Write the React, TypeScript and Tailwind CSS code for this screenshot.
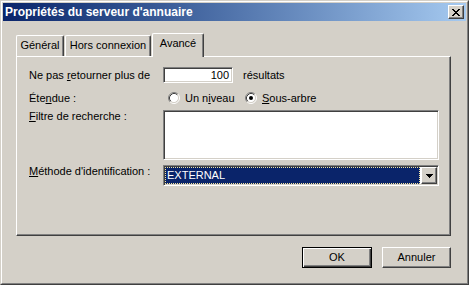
import type { ReactNode } from 'react'

const SUNKEN =
  'border border-t-[#808080] border-l-[#808080] border-r-white border-b-white shadow-[inset_1px_1px_0_#404040,inset_-1px_-1px_0_#d4d0c8]'
const RAISED =
  'border border-t-white border-l-white border-r-[#404040] border-b-[#404040] shadow-[inset_-1px_-1px_0_#808080,inset_1px_1px_0_#d4d0c8]'

// pixel glyphs, one string per row
function Glyph({ rows }: { rows: string[] }) {
  const w = rows[0].length
  const h = rows.length
  return (
    <svg width={w} height={h} viewBox={`0 0 ${w} ${h}`} shapeRendering="crispEdges">
      {rows.flatMap((row, y) =>
        row.split('').map((c, x) => (c === 'x' ? <rect key={`${x}-${y}`} x={x} y={y} width={1} height={1} fill="#000" /> : null))
      )}
    </svg>
  )
}

const CLOSE_X = ['xx....xx', '.xx..xx.', '..xxxx..', '...xx...', '..xxxx..', '.xx..xx.', 'xx....xx']
const ARROW = ['xxxxxxx', '.xxxxx.', '..xxx..', '...x...']

function Radio({ checked }: { checked?: boolean }) {
  return (
    <svg width={12} height={12} viewBox="0 0 12 12" className="shrink-0">
      <circle cx={6} cy={6} r={4.5} fill="#fff" />
      <path d="M2.11 9.89 A5.5 5.5 0 0 1 9.89 2.11" stroke="#808080" fill="none" />
      <path d="M9.89 2.11 A5.5 5.5 0 0 1 2.11 9.89" stroke="#fff" fill="none" />
      <path d="M2.82 9.18 A4.5 4.5 0 0 1 9.18 2.82" stroke="#404040" fill="none" />
      <path d="M9.18 2.82 A4.5 4.5 0 0 1 2.82 9.18" stroke="#d4d0c8" fill="none" />
      {checked && <circle cx={6} cy={6} r={2} fill="#000" />}
    </svg>
  )
}

function Tab({ children, active, className }: { children: ReactNode; active?: boolean; className: string }) {
  return (
    <div
      className={`flex justify-center pt-[3px] rounded-t-[2px] border-l border-t border-r border-l-white border-t-white border-r-[#404040] shadow-[inset_-1px_0_0_#808080] bg-[#d4d0c8] ${
        active ? 'h-[24px] -mb-px relative z-10' : 'h-[21px]'
      } ${className}`}
    >
      {children}
    </div>
  )
}

export default function App() {
  return (
    <div className="w-[469px] h-[285px] bg-[#d4d0c8] border border-t-[#d4d0c8] border-l-[#d4d0c8] border-r-[#404040] border-b-[#404040] font-['Liberation_Sans',Arial,sans-serif] text-[11px] leading-[13px] text-black select-none">
      <div className="h-full border border-t-white border-l-white border-r-[#808080] border-b-[#808080] p-px flex flex-col">
        {/* Title bar */}
        <div className="h-[18px] shrink-0 flex items-center justify-between pl-[2px] pr-[2px] bg-linear-to-r from-[#0a246a] to-[#a6caf0]">
          <span className="text-white font-bold text-[12px] leading-[14px]">Propriétés du serveur d'annuaire</span>
          <div className={`w-[16px] h-[14px] bg-[#d4d0c8] flex items-center justify-center ${RAISED}`}>
            <Glyph rows={CLOSE_X} />
          </div>
        </div>

        <div className="pl-[13px] pr-[15px] pt-[12px] flex flex-col">
          {/* Tabs */}
          <div className="h-[23px] flex items-end">
            <Tab className="w-[48px]">Général</Tab>
            <Tab className="w-[86px] ml-px">Hors connexion</Tab>
            <Tab active className="w-[52px] ml-px">
              Avancé
            </Tab>
          </div>

          {/* Panel */}
          <div className="h-[180px] border border-t-white border-l-white border-r-[#404040] border-b-[#404040] shadow-[inset_-1px_-1px_0_#808080] pl-[12px] pt-[10px]">
            <div className="h-[16px] flex items-center">
              <span className="w-[134px] pt-px">
                Ne pas <u>r</u>etourner plus de
              </span>
              <div className={`w-[70px] h-[16px] bg-white text-right pr-[3px] pt-px ${SUNKEN}`}>100</div>
              <span className="ml-[10px] pt-px">résultats</span>
            </div>

            <div className="h-[14px] mt-[8px] flex items-center">
              <span className="w-[134px]">
                Éte<u>n</u>due :
              </span>
              <div className="w-[82px] pl-[5px] flex items-center gap-[5px]">
                <Radio />
                <span>
                  Un n<u>i</u>veau
                </span>
              </div>
              <div className="flex items-center gap-[5px]">
                <Radio checked />
                <span>
                  <u>S</u>ous-arbre
                </span>
              </div>
            </div>

            <div className="mt-[5px] flex items-start">
              <span className="w-[134px]">
                <u>F</u>iltre de recherche :
              </span>
              <div className={`w-[276px] h-[50px] bg-white ${SUNKEN}`} />
            </div>

            <div className="mt-[5px] flex items-start">
              <span className="w-[134px]">
                <u>M</u>éthode d'identification :
              </span>
              <div className={`w-[276px] h-[21px] bg-white p-px flex ${SUNKEN}`}>
                <div className="flex-1 bg-[#0a246a] text-white border border-dotted border-[#f5e6a0] pl-[1px] flex items-center">
                  EXTERNAL
                </div>
                <div className={`w-[16px] ml-px bg-[#d4d0c8] flex items-center justify-center ${RAISED}`}>
                  <Glyph rows={ARROW} />
                </div>
              </div>
            </div>
          </div>

          {/* Buttons */}
          <div className="mt-[11px] flex justify-end gap-[10px]">
            <button className="w-[70px] h-[21px] border border-black bg-[#d4d0c8] shadow-[inset_1px_1px_0_#fff,inset_-1px_-1px_0_#404040,inset_-2px_-2px_0_#808080] flex items-center justify-center">
              OK
            </button>
            <button className={`w-[69px] h-[21px] bg-[#d4d0c8] flex items-center justify-center ${RAISED}`}>
              Annuler
            </button>
          </div>
        </div>
      </div>
    </div>
  )
}
